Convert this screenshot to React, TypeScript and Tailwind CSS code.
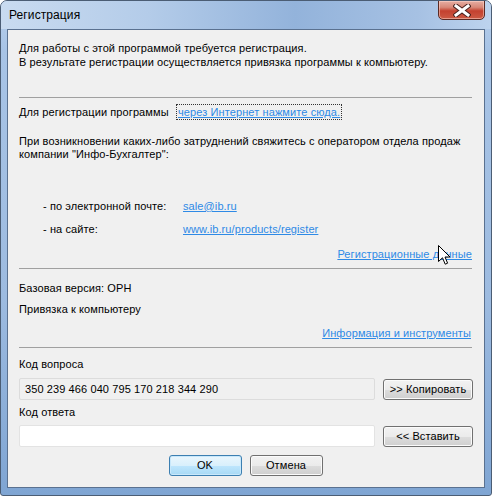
import React from 'react';

const font = { fontFamily: '"Liberation Sans", Arial, sans-serif' };

function WinButton({ label, primary = false, className = '' }: { label: string; primary?: boolean; className?: string }) {
  return (
    <button
      className={`h-[21px] rounded-[3px] border text-[11px] text-black leading-none ${
        primary
          ? 'border-[#3c7fb1] bg-[linear-gradient(to_bottom,#eaf6fd_0%,#d9f0fc_50%,#bee6fd_51%,#a7d9f5_100%)] shadow-[inset_0_0_0_1px_#c8e8fb]'
          : 'border-[#707070] bg-[linear-gradient(to_bottom,#f2f2f2_0%,#ebebeb_50%,#dddddd_51%,#cfcfcf_100%)] shadow-[inset_0_0_0_1px_#fbfbfb]'
      } ${className}`}
    >
      {label}
    </button>
  );
}

function Separator() {
  return <div className="h-px bg-[#a0a0a0] mr-[2px]" />;
}

function Cursor() {
  return (
    <svg className="absolute left-[437px] top-[244px]" width="13" height="21" viewBox="0 0 13 21">
      <path
        d="M0.5 0.5 L0.5 16.5 L4.5 12.8 L7.2 19.2 L9.6 18.2 L7 12 L12 12 Z"
        fill="#ffffff"
        stroke="#000000"
        strokeWidth="1"
        strokeLinejoin="miter"
      />
    </svg>
  );
}

export default function App() {
  return (
    <div
      className="relative w-[492px] h-[496px] rounded-t-[7px] rounded-b-[3px] border border-[#4b5d74] bg-[linear-gradient(to_bottom,#b8cfeb_0%,#a8c4e6_10%,#9dbbe0_60%,#7fa5d3_100%)] overflow-hidden tracking-[0.1px]"
      style={font}
    >
      {/* title bar */}
      <div className="relative h-[28px] flex items-center pl-[8px] bg-[linear-gradient(to_right,#c9dbf0_0%,#b4cce9_30%,#93b3db_60%,#a6c1e3_85%,#bdd3ee_100%)]">
        <span className="text-[12px] text-black">Регистрация</span>
        <div className="absolute right-[6px] top-[-1px] w-[47px] h-[20px] rounded-b-[5px] border border-[#5a2a24] bg-[linear-gradient(to_bottom,#e7aea3_0%,#d88878_35%,#c4412f_55%,#cc5a44_100%)] shadow-[inset_0_0_0_1px_rgba(255,220,210,0.5)] flex items-center justify-center">
          <svg width="18" height="13" viewBox="0 0 18 13">
            <path d="M3 2 L15 11 M15 2 L3 11" stroke="#4a2320" strokeWidth="5" strokeLinecap="square" />
            <path d="M3 2 L15 11 M15 2 L3 11" stroke="#ffffff" strokeWidth="3" strokeLinecap="square" />
          </svg>
        </div>
      </div>

      {/* client area */}
      <div className="mx-[6px] h-[459px] border border-[#5a7190] bg-[#f0f0f0] pl-[11px] pr-[10px] pt-[11px] text-[11px] text-black">
        <div className="leading-[14px]">
          <div>Для работы с этой программой требуется регистрация.</div>
          <div>В результате регистрации осуществляется привязка программы к компьютеру.</div>
        </div>

        <div className="mt-[28px]">
          <Separator />
        </div>

        <div className="mt-[6px] h-[16px] flex items-center">
          <span className="w-[157px]">Для регистрации программы</span>
          <span className="h-[16px] px-px flex items-center border border-dotted border-[#333] text-[#2e8ae6] underline">
            через Интернет нажмите сюда.
          </span>
        </div>

        <div className="mt-[15px] leading-[13px]">
          <div>При возникновении каких-либо затруднений свяжитесь с оператором отдела продаж</div>
          <div>компании "Инфо-Бухгалтер":</div>
        </div>

        <div className="mt-[37px] h-[16px] flex items-center pl-[24px]">
          <span className="w-[140px]">- по электронной почте:</span>
          <span className="text-[#2e8ae6] underline">sale@ib.ru</span>
        </div>
        <div className="mt-[7px] h-[16px] flex items-center pl-[24px]">
          <span className="w-[140px]">- на сайте:</span>
          <span className="text-[#2e8ae6] underline">www.ib.ru/products/register</span>
        </div>

        <div className="mt-[9px] h-[16px] flex items-center justify-end pr-[2px]">
          <span className="text-[#2e8ae6] underline">Регистрационные данные</span>
        </div>

        <div className="mt-[6px]">
          <Separator />
        </div>

        <div className="mt-[11px] h-[16px] flex items-center">Базовая версия: ОРН</div>
        <div className="mt-[5px] h-[16px] flex items-center">Привязка к компьютеру</div>

        <div className="mt-[8px] h-[16px] flex items-center justify-end pr-[3px]">
          <span className="text-[#2e8ae6] underline">Информация и инструменты</span>
        </div>

        <div className="mt-[6px]">
          <Separator />
        </div>

        <div className="mt-[8px] h-[16px] flex items-center">Код вопроса</div>
        <div className="mt-[6px] flex items-start gap-[8px]">
          <div className="w-[356px] h-[22px] border border-[#dcdcdc] rounded-[2px] bg-[#f0f0f0] pl-[5px] flex items-center">
            350 239 466 040 795 170 218 344 290
          </div>
          <WinButton label=">> Копировать" className="w-[90px] mt-px" />
        </div>

        <div className="mt-[4px] h-[16px] flex items-center">Код ответа</div>
        <div className="mt-[5px] flex items-start gap-[8px]">
          <div className="w-[356px] h-[22px] border border-[#e3e3e3] rounded-[2px] bg-white" />
          <WinButton label="<< Вставить" className="w-[90px] mt-px" />
        </div>

        <div className="mt-[8px] flex justify-center gap-[8px] pr-[2px]">
          <WinButton label="OK" primary className="w-[73px]" />
          <WinButton label="Отмена" className="w-[73px]" />
        </div>
      </div>

      <Cursor />
    </div>
  );
}
